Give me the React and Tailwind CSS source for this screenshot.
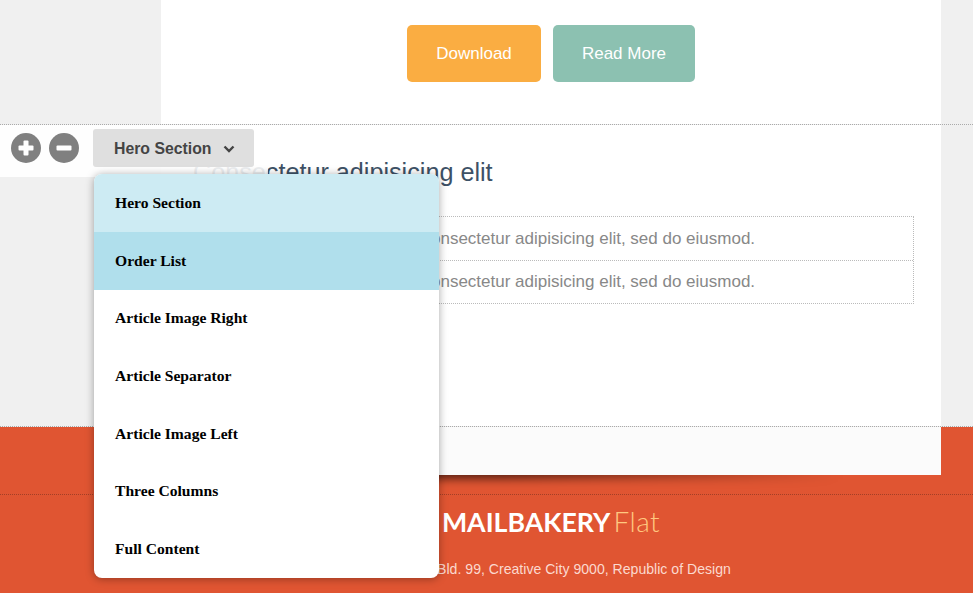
import React from 'react';

const sections = [
  'Hero Section',
  'Order List',
  'Article Image Right',
  'Article Separator',
  'Article Image Left',
  'Three Columns',
  'Full Content',
];

const Toolbar = () => {
  return (
    <div className="absolute left-0 top-[125px] flex h-[52px] w-[268px] items-start bg-white/90 pl-[11px] pt-[8px]">
      {/* Add / remove */}
      <svg width="30" height="30" viewBox="0 0 30 30" className="mr-[8px]">
        <circle cx="15" cy="15" r="15" fill="#808080" />
        <rect x="7.500" y="12.500" width="15" height="5" rx="1" fill="#fff" />
        <rect x="12.500" y="7.500" width="5" height="15" rx="1" fill="#fff" />
      </svg>
      <svg width="30" height="30" viewBox="0 0 30 30">
        <circle cx="15" cy="15" r="15" fill="#808080" />
        <rect x="7.500" y="12.500" width="15" height="5" rx="1" fill="#fff" />
      </svg>

      <button className="ml-[14px] mt-[-4px] flex h-[38px] w-[161px] items-center rounded-[3px] bg-[#dfdfdf] pl-[21px] pt-[1px] text-[15.8px] font-bold text-[#444444]">
        Hero Section
        <svg width="12" height="8" viewBox="0 0 12 8" className="ml-[12px] mt-[1px]">
          <path d="M1.500 1.500 6 6l4.500-4.500" fill="none" stroke="#444444" strokeWidth="2.400" />
        </svg>
      </button>
    </div>
  );
};

const SectionMenu = () => {
  return (
    <ul className="absolute left-[94px] top-[174px] flex h-[404px] w-[345px] flex-col overflow-hidden rounded-lg bg-white font-['Liberation_Serif',serif] text-[15.6px] font-bold text-black shadow-[0_1px_8px_rgba(0,0,0,0.35)]">
      {sections.map((name, i) => (
        <li
          key={name}
          className={`flex items-center pl-[21px] ${i === 2 || i === 5 ? 'h-[57px] pb-[1px]' : 'h-[58px]'} ${i === 0 ? 'bg-[#cdebf3]' : ''} ${i === 1 ? 'bg-[#b0dfec]' : ''}`}
        >
          {name}
        </li>
      ))}
    </ul>
  );
};

const App = () => {
  return (
    <div className="relative h-[593px] w-[973px] overflow-hidden bg-[#f0f0f0] font-['Liberation_Sans',sans-serif]">
      {/* Hero */}
      <div className="mx-[161px] flex h-[124px] w-[780px] justify-center gap-[12px] bg-white pt-[25px]">
        <a className="flex h-[57px] w-[134px] items-center justify-center rounded-[5px] bg-[#faad42] text-[17px] text-white">Download</a>
        <a className="flex h-[57px] w-[142px] items-center justify-center rounded-[5px] bg-[#8cc1b1] text-[17px] text-white">Read More</a>
      </div>

      {/* Order list */}
      <div className="h-[303px] border-y border-dotted border-y-[#aaaaaa]">
        <div className="mx-[161px] h-full w-[780px] bg-white px-[32px] pr-[27px] pt-[29px]">
          <h2 className="text-[25.2px] leading-[36px] text-[#3d5166]">Consectetur adipisicing elit</h2>
          <div className="mt-[26px] border border-dotted border-[#bbbbbb]">
            <div className="flex h-[44px] items-center border-b border-dotted border-[#bbbbbb] pl-[14px] text-[17px] text-[#888888]">
              Lorem ipsum dolor sit amet, consectetur adipisicing elit, sed do eiusmod.
            </div>
            <div className="flex h-[42px] items-center pl-[14px] text-[17px] text-[#888888]">
              Lorem ipsum dolor sit amet, consectetur adipisicing elit, sed do eiusmod.
            </div>
          </div>
        </div>
      </div>

      {/* Footer */}
      <div className="relative h-[166px] bg-[#e05532]">
        <div className="absolute left-[161px] top-[38px] h-[14px] w-[680px] bg-gradient-to-r from-black/70 via-black/60 to-transparent blur-[5px]"></div>
        <div className="relative mx-[161px] h-[48px] w-[780px] bg-[#fbfbfb]"></div>
        <div className="mt-[19px] border-t border-dotted border-[#a33f26]"></div>
        <div className="relative mx-[161px] w-[780px] text-center">
          <div className="mt-[8px] font-['Lato',sans-serif] text-[26.7px] leading-[36px] text-white">
            <span className="font-bold">MAILBAKERY</span>
            <span className="ml-[3px] text-[28px] font-light tracking-[0.5px] text-[#ffc880]">Flat</span>
          </div>
          <p className="mt-[19px] pr-[10px] text-[14.1px] leading-[20px] text-[#fbd9cf]">Main Street Bld. 99, Creative City 9000, Republic of Design</p>
        </div>
      </div>

      <Toolbar />
      <SectionMenu />
    </div>
  );
};

export default App;
